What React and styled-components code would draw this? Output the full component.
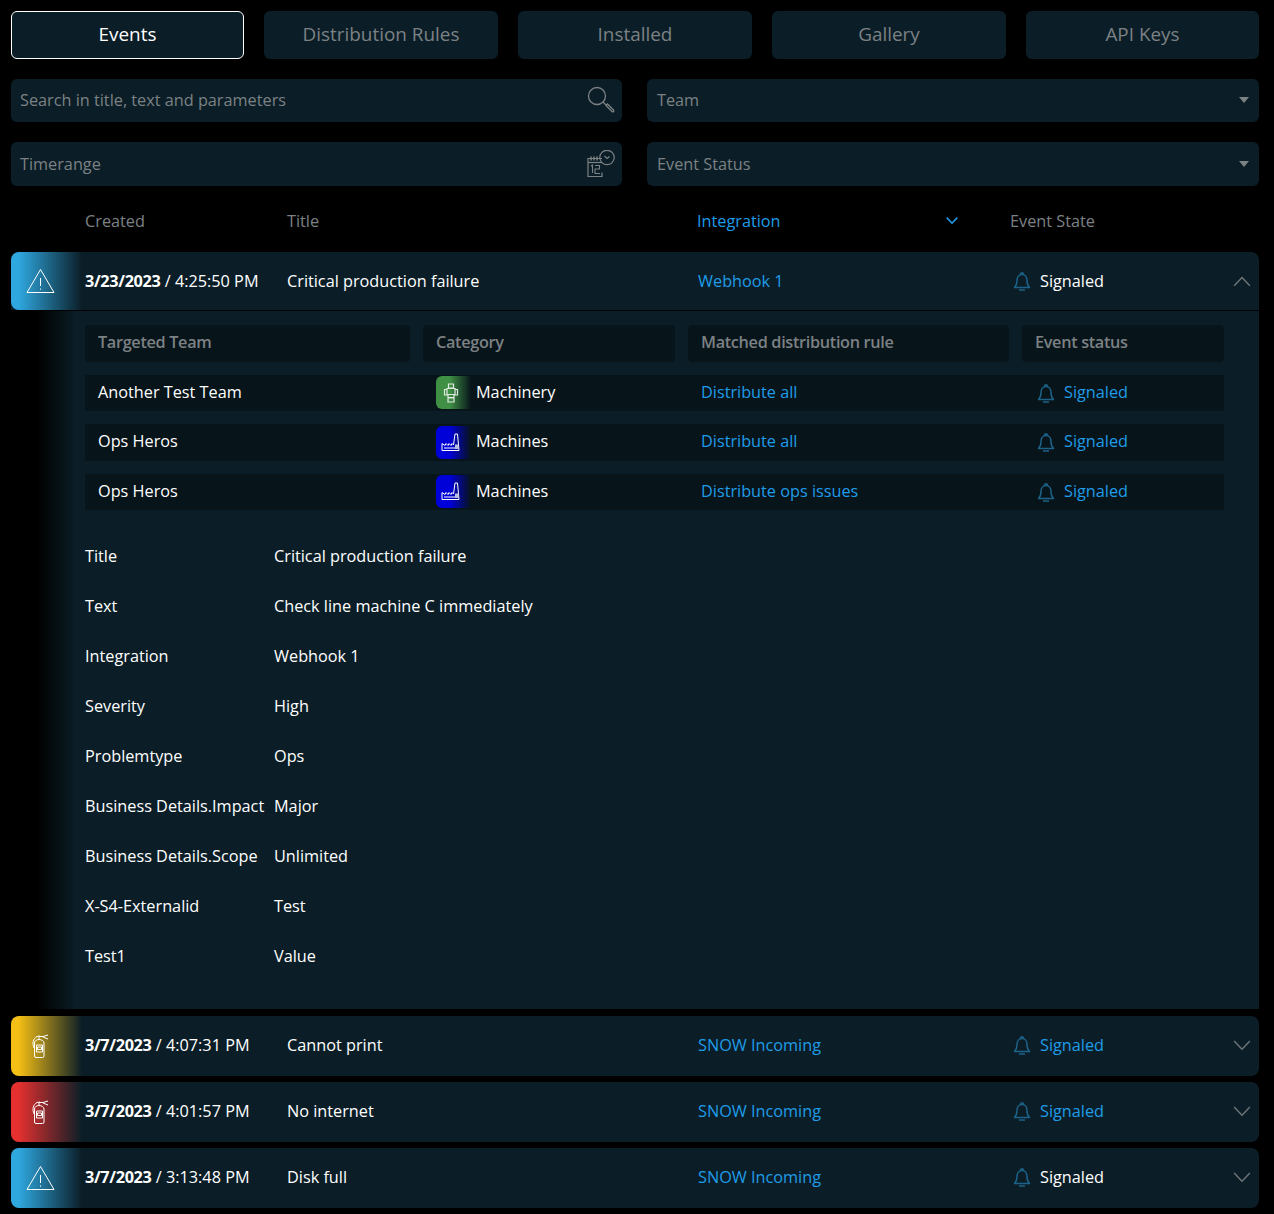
import React from "react";
import styled, { createGlobalStyle } from "styled-components";

const panel = "#0b1e27";
const muted = "#7c8184";
const blue = "#1f9ce8";

const Global = createGlobalStyle`
  html, body {
    margin: 0;
    background: #000;
    font-family: "Open Sans", "Liberation Sans", sans-serif;
    font-size: 16.25px;
    color: #fff;
  }
  * { box-sizing: border-box; }
`;

const Page = styled.div`
  padding: 11px 15px 6px 11px;
`;

const Tabs = styled.div`
  display: grid;
  grid-template-columns: 233px 234px 234px 234px 233px;
  gap: 20px;
`;

const Tab = styled.div`
  height: 48px;
  padding-bottom: 2px;
  display: flex;
  align-items: center;
  justify-content: center;
  background: ${panel};
  border-radius: 6px;
  font-size: 18.9px;
  color: ${(p) => (p.$active ? "#fff" : muted)};
  border: ${(p) => (p.$active ? "1px solid #fff" : "none")};
`;

const Filters = styled.div`
  margin-top: 20px;
  display: grid;
  grid-template-columns: 611px 612px;
  grid-template-rows: 43px 44px;
  column-gap: 25px;
  row-gap: 20px;
`;

const Field = styled.div`
  display: flex;
  align-items: center;
  justify-content: space-between;
  background: ${panel};
  border-radius: 6px;
  padding: 0 ${(p) => (p.$select ? "7px" : "6px")} 1px ${(p) => (p.$select ? "10px" : "9px")};
  color: ${muted};
`;

const Caret = styled.span`
  width: 0;
  height: 0;
  margin-right: 3px;
  border-left: 5px solid transparent;
  border-right: 5px solid transparent;
  border-top: 6px solid ${muted};
`;

const ColumnHeads = styled.div`
  height: 66px;
  padding-top: 4px;
  display: grid;
  grid-template-columns: 74px 202px 410px 313px 1fr;
  align-items: center;
  color: ${muted};
`;

const SortHead = styled.div`
  display: flex;
  align-items: center;
  justify-content: space-between;
  padding-right: 52px;
  color: ${blue};
`;

const Row = styled.div`
  height: ${(p) => (p.$open ? "58px" : "59.5px")};
  padding-bottom: ${(p) => (p.$open ? "0" : "1px")};
  display: grid;
  grid-template-columns: 74px 202px 411px 312px 1fr 40px;
  align-items: center;
  background: ${panel};
  border-radius: ${(p) => (p.$open ? "8px 8px 0 0" : "8px")};
  margin-bottom: ${(p) => (p.$open ? "0" : "6.5px")};
`;

const Severity = styled.div`
  align-self: stretch;
  width: 71px;
  margin-bottom: ${(p) => (p.$open ? "0" : "-1px")};
  display: flex;
  align-items: center;
  padding-left: 15px;
  border-radius: 8px 0 0 8px;
  background: linear-gradient(90deg, ${(p) => p.$color} 10%, ${panel} 100%);
`;

const DateText = styled.div`
  white-space: nowrap;
`;

const Day = styled.b`
  font-weight: 700;
  letter-spacing: -0.33px;
`;

const Source = styled.div`
  color: ${blue};
`;

const StateCell = styled.div`
  display: flex;
  align-items: center;
  gap: 9px;
  padding-left: ${(p) => (p.$inset ? "2px" : "3px")};
  color: ${(p) => (p.$link ? blue : "#fff")};
`;

const Toggle = styled.div`
  display: flex;
  justify-content: flex-end;
  padding-right: 8px;
`;

const Expanded = styled.div`
  margin-top: 1px;
  margin-bottom: 7px;
  height: 698px;
  padding: 14px 35px 0 74px;
  background: linear-gradient(90deg, #000 26px, ${panel} 66px);
`;

const TeamTable = styled.div`
  display: grid;
  grid-template-columns: 338px 265px 334px 202px;
  grid-auto-rows: 36.5px;
  row-gap: 13px;
`;

const HeadCell = styled.div`
  display: flex;
  align-items: center;
  margin-right: ${(p) => (p.$last ? "0" : "13px")};
  padding: 0 0 2px 13px;
  background: #07141a;
  color: ${muted};
  font-weight: 600;
  letter-spacing: -0.32px;
  border-radius: 4px;
`;

const Cell = styled.div`
  display: flex;
  align-items: center;
  gap: 5px;
  padding: 0 0 0 13px;
  background: #07141a;
  color: ${(p) => (p.$link ? blue : "#fff")};
`;

const CellText = styled.span`
  margin-top: -2px;
`;

const CategoryIcon = styled.div`
  width: 35px;
  height: 33px;
  display: flex;
  align-items: center;
  justify-content: center;
  padding-right: 6px;
  border-radius: 6px 0 0 6px;
  background: linear-gradient(90deg, ${(p) => p.$color} 40%, #07141a 100%);
`;

const Details = styled.dl`
  margin: 21px 0 0;
  display: grid;
  grid-template-columns: 189px 1fr;
  grid-auto-rows: 50.05px;
  align-items: center;
`;

const Term = styled.dt`
  white-space: nowrap;
`;

const Value = styled.dd`
  margin: 0;
`;

const SearchIcon = () => (
  <svg width="30" height="30" viewBox="0 0 30 30" fill="none" stroke={muted} strokeWidth="1.3">
    <circle cx="11" cy="11" r="8.500" />
    <path d="M17 17l3 3" />
    <path d="M20 20.500l1.500-1.500 6 6a1 1 0 0 1 0 1.500l0 0a1 1 0 0 1-1.500 0z" />
  </svg>
);

const CalendarIcon = () => (
  <svg width="30" height="28" viewBox="0 0.5 30 28" fill="none" stroke={muted} strokeWidth="1.2">
    <path d="M16 9H2v18h14v-4" />
    <path d="M2 13h14" />
    <path d="M5 7v4M8 7v4M11 7v4" strokeWidth="1.5" />
    <path d="M5 16.500l1.500-1v8M9 16h4.500v3.500H9V24h5" strokeWidth="1.1" />
    <circle cx="21" cy="8" r="7.2" />
    <path d="M18.500 6.500l2.500 2.500 2.500-2" />
  </svg>
);

const AlertIcon = () => (
  <svg width="29" height="26" viewBox="0 0 29 26" fill="none" stroke="#fff" strokeWidth="1" strokeLinejoin="round">
    <path d="M14.500 1.500L28 24.500H1z" />
    <path d="M14.500 10v8M14.500 20.500v1.2" />
  </svg>
);

const ExtinguisherIcon = () => (
  <svg width="29" height="24" viewBox="0 0 29 24" fill="none" stroke="#fff" strokeWidth="1">
    <path d="M8.500 9c0-2 2-3.500 4.500-3.500s5 1.500 5 3.500v13a1.500 1.500 0 0 1-1.500 1.500H10A1.500 1.500 0 0 1 8.500 22z" />
    <path d="M10.500 11h6v7h-6zM11.500 13h4v2.500h-4z" />
    <path d="M8 14C6 9.500 7 4.500 11 2.500L14 2M13 5.500V2.500h4L22 1M17 3l5 2" />
  </svg>
);

const RobotIcon = () => (
  <svg width="16" height="20" viewBox="0 0 16 20" fill="none" stroke="#dfe9df" strokeWidth="1.2">
    <path d="M5.500 1h5v4h-5zM4 5.500h8v6H4zM1.500 6.500H4v5.500H1.500zM12 6.500h2.500v5.500H12zM5 11.500h6v3H5zM5 15h6v4H5z" />
  </svg>
);

const FactoryIcon = () => (
  <svg width="19" height="19" viewBox="0 0 19 19" fill="none" stroke="#fff" strokeWidth="1">
    <path d="M1 17.500V10.500l3 2 1-2 2 2 1-2 2 2 1-2 1.500 1.500L14 1h2.500l1.500 16.500z" />
    <path d="M3 15h14" />
    <path d="M14 11.500h3.500V16H14z" fill="#b8bde0" stroke="none" />
  </svg>
);

const BellIcon = () => (
  <svg width="18" height="20" viewBox="0 0 18 20" fill="none" stroke="#1d6288" strokeWidth="1.5" strokeLinejoin="round">
    <path d="M1.500 16.500c1.500-1.500 2.500-3 2.500-7C4 6 6 3.500 9 3.500s5 2.500 5 6c0 4 1 5.500 2.500 7z" />
    <path d="M7.500 3.500c0-2.500 3-2.500 3 0M6 19h6" />
  </svg>
);

const Chevron = ({ up, color = "#6f7679", size = 18, width = 1.4 }) => (
  <svg width={size} height={size * 0.6} viewBox="0 0 18 11" fill="none" stroke={color} strokeWidth={width}>
    <path d={up ? "M1 10l8-8.500 8 8.500" : "M1 1l8 8.500 8-8.500"} />
  </svg>
);

const tabs = ["Events", "Distribution Rules", "Installed", "Gallery", "API Keys"];

const targets = [
  { team: "Another Test Team", category: "Machinery", color: "#3f8f45", icon: <RobotIcon />, rule: "Distribute all" },
  { team: "Ops Heros", category: "Machines", color: "#0000d8", icon: <FactoryIcon />, rule: "Distribute all" },
  { team: "Ops Heros", category: "Machines", color: "#0000d8", icon: <FactoryIcon />, rule: "Distribute ops issues" },
];

const details = [
  ["Title", "Critical production failure"],
  ["Text", "Check line machine C immediately"],
  ["Integration", "Webhook 1"],
  ["Severity", "High"],
  ["Problemtype", "Ops"],
  ["Business Details.Impact", "Major"],
  ["Business Details.Scope", "Unlimited"],
  ["X-S4-Externalid", "Test"],
  ["Test1", "Value"],
];

const EventRow = ({ color, icon, day, time, title, source, stateLink, open }) => (
  <Row $open={open}>
    <Severity $color={color} $open={open}>{icon}</Severity>
    <DateText>
      <Day>{day}</Day> / {time}
    </DateText>
    <div>{title}</div>
    <Source>{source}</Source>
    <StateCell $link={stateLink}>
      <BellIcon />
      Signaled
    </StateCell>
    <Toggle>
      <Chevron up={open} />
    </Toggle>
  </Row>
);

export default function App() {
  return (
    <Page>
      <Global />
      <Tabs>
        {tabs.map((t, i) => (
          <Tab key={t} $active={i === 0}>{t}</Tab>
        ))}
      </Tabs>
      <Filters>
        <Field>Search in title, text and parameters<SearchIcon /></Field>
        <Field $select>Team<Caret /></Field>
        <Field>Timerange<CalendarIcon /></Field>
        <Field $select>Event Status<Caret /></Field>
      </Filters>
      <ColumnHeads>
        <span />
        <div>Created</div>
        <div>Title</div>
        <SortHead>
          Integration
          <Chevron color={blue} size={12} width={2.4} />
        </SortHead>
        <div>Event State</div>
      </ColumnHeads>
      <EventRow
        open
        color="#2fa8e0"
        icon={<AlertIcon />}
        day="3/23/2023"
        time="4:25:50 PM"
        title="Critical production failure"
        source="Webhook 1"
      />
      <Expanded>
        <TeamTable>
          <HeadCell>Targeted Team</HeadCell>
          <HeadCell>Category</HeadCell>
          <HeadCell>Matched distribution rule</HeadCell>
          <HeadCell $last>Event status</HeadCell>
          {targets.map((t) => (
            <React.Fragment key={t.rule}>
              <Cell><CellText>{t.team}</CellText></Cell>
              <Cell>
                <CategoryIcon $color={t.color}>{t.icon}</CategoryIcon>
                <CellText>{t.category}</CellText>
              </Cell>
              <Cell $link><CellText>{t.rule}</CellText></Cell>
              <Cell $link>
                <StateCell $link $inset>
                  <BellIcon />
                  <CellText>Signaled</CellText>
                </StateCell>
              </Cell>
            </React.Fragment>
          ))}
        </TeamTable>
        <Details>
          {details.map(([k, v]) => (
            <React.Fragment key={k}>
              <Term>{k}</Term>
              <Value>{v}</Value>
            </React.Fragment>
          ))}
        </Details>
      </Expanded>
      <EventRow
        color="#f5c015"
        icon={<ExtinguisherIcon />}
        day="3/7/2023"
        time="4:07:31 PM"
        title="Cannot print"
        source="SNOW Incoming"
        stateLink
      />
      <EventRow
        color="#e5302f"
        icon={<ExtinguisherIcon />}
        day="3/7/2023"
        time="4:01:57 PM"
        title="No internet"
        source="SNOW Incoming"
        stateLink
      />
      <EventRow
        color="#2fa8e0"
        icon={<AlertIcon />}
        day="3/7/2023"
        time="3:13:48 PM"
        title="Disk full"
        source="SNOW Incoming"
      />
    </Page>
  );
}
